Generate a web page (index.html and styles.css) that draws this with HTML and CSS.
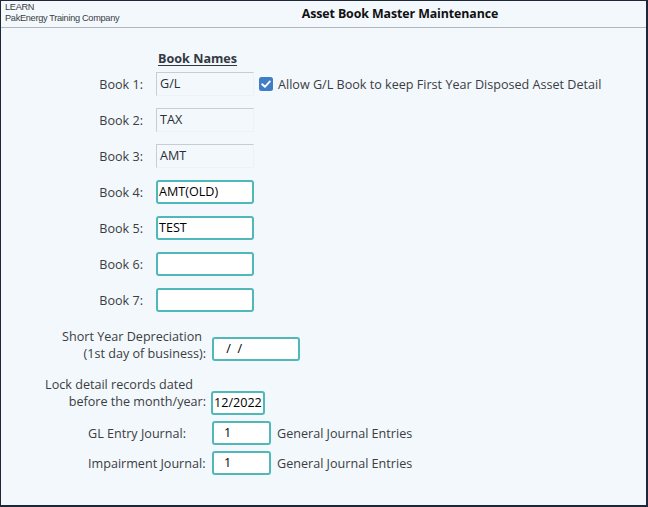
FILE: index.html
```html
<!DOCTYPE html>
<html>
<head>
<meta charset="utf-8">
<link rel="stylesheet" href="styles.css">
</head>
<body>
<div class="window">
  <header class="header">
    <div class="company">
      <div class="env">LEARN</div>
      <div class="name">PakEnergy Training Company</div>
    </div>
    <div class="title">Asset Book Master Maintenance</div>
  </header>
  <main class="content">
    <div class="books">
      <div class="books-head"><span>Book Names</span></div>
      <div class="book-row">
        <label class="book-label">Book 1:</label>
        <div class="field readonly">G/L</div>
        <div class="check">
          <span class="box"><svg width="14" height="14" viewBox="0 0 14 14"><rect x="0" y="0" width="14" height="14" rx="2.5" fill="#3f7ec6"/><path d="M3.2 7.2 L5.9 9.8 L10.9 4.4" fill="none" stroke="#fff" stroke-width="1.9" stroke-linecap="round" stroke-linejoin="round"/></svg></span>
          <span class="check-text">Allow G/L Book to keep First Year Disposed Asset Detail</span>
        </div>
      </div>
      <div class="book-row">
        <label class="book-label">Book 2:</label>
        <div class="field readonly">TAX</div>
      </div>
      <div class="book-row">
        <label class="book-label">Book 3:</label>
        <div class="field readonly">AMT</div>
      </div>
      <div class="book-row">
        <label class="book-label">Book 4:</label>
        <div class="field edit">AMT(OLD)</div>
      </div>
      <div class="book-row">
        <label class="book-label">Book 5:</label>
        <div class="field edit">TEST</div>
      </div>
      <div class="book-row">
        <label class="book-label">Book 6:</label>
        <div class="field edit"></div>
      </div>
      <div class="book-row">
        <label class="book-label">Book 7:</label>
        <div class="field edit"></div>
      </div>
    </div>

    <div class="opts">
      <div class="opt-row row-short">
        <div class="opt-label two">
          <span class="l1 p4">Short Year Depreciation</span>
          <span class="l2">(1st day of business):</span>
        </div>
        <div class="field edit w-short in-short"><span class="date"> /  /</span></div>
      </div>
      <div class="opt-row row-lock">
        <div class="opt-label two">
          <span class="l1 p13">Lock detail records dated</span>
          <span class="l2">before the month/year:</span>
        </div>
        <div class="field edit w-lock in-lock">12/2022</div>
      </div>
      <div class="opt-row row-gl">
        <div class="opt-label left">GL Entry Journal:</div>
        <div class="field edit w-jnl"><span class="num">1</span></div>
        <div class="after">General Journal Entries</div>
      </div>
      <div class="opt-row row-imp">
        <div class="opt-label left">Impairment Journal:</div>
        <div class="field edit w-jnl"><span class="num">1</span></div>
        <div class="after">General Journal Entries</div>
      </div>
    </div>
  </main>
</div>
</body>
</html>
```

FILE: styles.css
```css
* { box-sizing: border-box; }
html, body { margin: 0; padding: 0; }
body {
  width: 648px;
  height: 507px;
  font-family: "Open Sans", "Noto Sans", sans-serif;
  font-size: 12.6px;
  color: #3a3d41;
  background: #f3f8fd;
}
.window {
  width: 648px;
  height: 507px;
  border-top: 1px solid #1d2738;
  border-left: 1px solid #1d2738;
  border-right: 2px solid #1d2738;
  border-bottom: 2px solid #1d2738;
  background: #f3f8fd;
  display: flex;
  flex-direction: column;
}
.header {
  height: 27px;
  border-bottom: 1px solid #b3b7bb;
  display: flex;
  align-items: stretch;
}
.company {
  width: 153px;
  padding-left: 4px;
  font-family: "Liberation Sans", sans-serif;
  font-size: 9.2px;
  color: #3a3d41;
  letter-spacing: -0.3px;
  line-height: 11px;
  padding-top: 1px;
}
.title {
  flex: 1;
  text-align: center;
  font-family: "Open Sans", sans-serif;
  font-weight: 700;
  font-size: 12.4px;
  color: #111;
  line-height: 26px;
  letter-spacing: -0.1px;
}
.content {
  flex: 1;
  padding-top: 24px;
}
.books-head {
  height: 14px;
  line-height: 14px;
  padding-left: 157px;
  font-weight: 700;
  color: #333a44;
}
.books-head span {
  text-decoration: underline;
  text-underline-offset: 2px;
}
.book-row {
  height: 36px;
  display: flex;
  align-items: center;
}
.book-label {
  width: 142px;
  text-align: right;
  margin-right: 13px;
  padding-top: 1px;
}
.field {
  height: 24px;
  width: 98px;
  line-height: 20px;
  color: #000;
  white-space: pre;
}
.readonly {
  border-top: 1px solid #c9cdd1;
  border-left: 1px solid #c9cdd1;
  border-right: 1px solid #eef2f6;
  border-bottom: 1px solid #eef2f6;
  color: #2b2e33;
  padding-left: 3px;
  line-height: 22px;
}
.edit {
  border: 2px solid #51b8b9;
  border-radius: 3px;
  background: #fff;
  padding-left: 1px;
}
.check {
  display: flex;
  align-items: center;
  margin-left: 5px;
}
.box { width: 14px; height: 14px; display: block; margin-right: 5px; }
.box svg { display: block; }
.check-text { color: #3a3d41; }

.opts { padding-top: 10px; }
.opt-row {
  display: flex;
  align-items: flex-start;
}
.opt-label {
  width: 211px;
  padding-left: 30px;
  padding-right: 6px;
  line-height: 17px;
}
.opt-label.two {
  display: flex;
  flex-direction: column;
  align-items: flex-end;
}
.opt-label.left {
  padding-left: 87px;
}
.p4 { padding-right: 4px; }
.p13 { padding-right: 13px; }
.w-short { width: 88px; }
.w-lock { width: 54px; margin-left: -1px; }
.w-jnl { width: 59px; }
.in-short { margin-top: 9px; }
.in-lock { margin-top: 15px; }
.row-short { height: 34px; }
.row-lock { margin-top: 14px; }
.row-gl { margin-top: 6px; }
.row-gl .opt-label, .row-imp .opt-label { margin-top: 4px; }
.row-imp { margin-top: 6px; }
.num { padding-left: 9px; }
.date { padding-left: 8px; }
.after {
  margin-left: 6px;
  margin-top: 4px;
  line-height: 17px;
}
```
